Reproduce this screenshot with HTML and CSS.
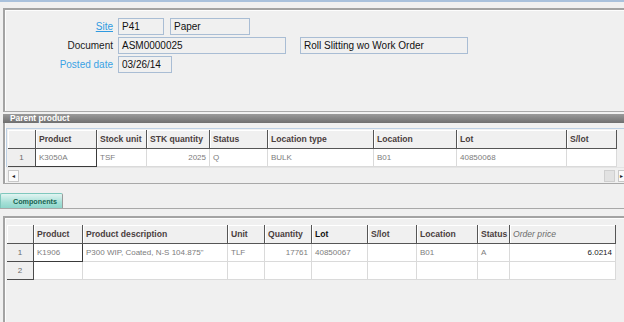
FILE: index.html
```html
<!DOCTYPE html>
<html>
<head>
<meta charset="utf-8">
<link rel="stylesheet" href="styles.css">
</head>
<body>
<div class="topline"></div>
<section class="hdr-panel">
  <div class="frow">
    <a class="lbl link">Site</a>
    <span class="fld w46">P41</span>
    <span class="fld w80 ml6">Paper</span>
  </div>
  <div class="frow">
    <span class="lbl">Document</span>
    <span class="fld w168">ASM0000025</span>
    <span class="fld w168 ml14">Roll Slitting wo Work Order</span>
  </div>
  <div class="frow">
    <span class="lbl blue">Posted date</span>
    <span class="fld w54">03/26/14</span>
  </div>
</section>

<section class="parent-panel">
  <div class="bar">Parent product</div>
  <div class="grid-frame">
    <table class="grid">
      <colgroup>
        <col style="width:28px"><col style="width:61px"><col style="width:50px"><col style="width:63px"><col style="width:58px"><col style="width:106px"><col style="width:83px"><col style="width:110px"><col style="width:50px">
      </colgroup>
      <tr class="hd">
        <th class="rn"></th><th>Product</th><th>Stock unit</th><th>STK quantity</th><th>Status</th><th>Location type</th><th>Location</th><th>Lot</th><th>S/lot</th>
      </tr>
      <tr>
        <td class="rn">1</td><td class="cur">K3050A</td><td>TSF</td><td class="num">2025</td><td>Q</td><td>BULK</td><td>B01</td><td>40850068</td><td></td>
      </tr>
    </table>
  </div>
  <div class="hscroll">
    <span class="sbtn">&#9666;</span>
    <span class="sfill"></span>
    <span class="sthumb"></span>
    <span class="sbtn right">&#9656;</span>
  </div>
</section>

<div class="tabs">
  <span class="tab">Components</span>
</div>

<section class="comp-panel">
  <table class="grid">
    <colgroup>
      <col style="width:27px"><col style="width:49px"><col style="width:145px"><col style="width:37px"><col style="width:47px"><col style="width:56px"><col style="width:49px"><col style="width:61px"><col style="width:32px"><col style="width:106px">
    </colgroup>
    <tr class="hd">
      <th class="rn"></th><th>Product</th><th>Product description</th><th>Unit</th><th>Quantity</th><th class="strong">Lot</th><th>S/lot</th><th>Location</th><th>Status</th><th class="ital">Order price</th>
    </tr>
    <tr>
      <td class="rn">1</td><td class="cur full">K1906</td><td>P300 WIP, Coated, N-S 104.875''</td><td>TLF</td><td class="num">17761</td><td>40850067</td><td></td><td>B01</td><td>A</td><td class="num dark">6.0214</td>
    </tr>
    <tr>
      <td class="rn">2</td><td></td><td></td><td></td><td></td><td></td><td></td><td></td><td></td><td></td>
    </tr>
  </table>
</section>
</body>
</html>
```
FILE: styles.css
```css
html, body {
  margin: 0;
  padding: 0;
  background: #f0f0f0;
  width: 624px;
  height: 322px;
  overflow: hidden;
  font-family: "Liberation Sans", Arial, sans-serif;
}

.topline {
  height: 2px;
  background: #a9c1dc;
}

.hdr-panel {
  margin: 6px 0 0 3px;
  height: 93px;
  padding-top: 8px;
  border-top: 2px solid #a3a3a3;
  border-left: 2px solid #a3a3a3;
  border-bottom: 1px solid #a8a8a8;
  box-shadow: inset 1px 1px 0 #fdfdfd;
  display: flex;
  flex-direction: column;
  gap: 2px;
}

.frow {
  display: flex;
  align-items: center;
  height: 17px;
}

.lbl {
  width: 113px;
  padding-right: 5px;
  box-sizing: border-box;
  text-align: right;
  font-size: 10px;
  color: #1a1a1a;
  flex: none;
}
.lbl.link {
  color: #2f9ae0;
  text-decoration: underline;
}
.lbl.blue { color: #3aa2e4; }

.fld {
  display: block;
  height: 17px;
  box-sizing: border-box;
  border: 1px solid #a9bdd4;
  background: #f0f0f0;
  font-size: 10px;
  line-height: 15px;
  padding-left: 3px;
  color: #111;
  flex: none;
}
.w46 { width: 46px; }
.w80 { width: 80px; }
.w168 { width: 168px; }
.w54 { width: 54px; }
.ml6 { margin-left: 6px; }
.ml14 { margin-left: 14px; }

.parent-panel {
  margin: 2px 0 0 3px;
  height: 69px;
  border-left: 2px solid #a3a3a3;
  border-bottom: 1px solid #a8a8a8;
  box-shadow: inset 1px 0 0 #fdfdfd;
}

.bar {
  height: 9px;
  margin-left: -2px;
  background: linear-gradient(#9a9a9a, #6f6f6f);
  color: #fff;
  font-size: 8.4px;
  font-weight: bold;
  line-height: 9px;
  padding-left: 7px;
}

.grid-frame {
  margin: 5px 0 0 1px;
  padding: 1px 0 0 1px;
  border-top: 1px solid #bdd0e4;
  border-left: 1px solid #bdd0e4;
}

.grid {
  border-collapse: separate;
  border-spacing: 0;
  table-layout: fixed;
  width: 609px;
}

.grid th, .grid td {
  padding: 0 3px;
  overflow: hidden;
  white-space: nowrap;
  text-align: left;
}

.grid tr.hd th {
  height: 18px;
  background: #f0f0f0;
  border-right: 1px solid #555;
  border-bottom: 1px solid #555;
  box-shadow: inset 1px 1px 0 #fff;
  font-size: 8.6px;
  font-weight: bold;
  color: #4a3e3e;
}
.grid tr.hd th.strong { color: #111; }
.grid tr.hd th.ital {
  font-weight: normal;
  font-style: italic;
  color: #6a6a6a;
}

.grid td {
  height: 17px;
  background: #fff;
  border-right: 1px solid #dadada;
  border-bottom: 1px solid #dadada;
  font-size: 8px;
  color: #7c7c7c;
}
.grid td.rn, .grid th.rn {
  background: #efefef;
  text-align: center;
  border-right: 1px solid #4c4c4c;
  border-bottom: 1px solid #4c4c4c;
  color: #6a6a6a;
  font-size: 8px;
}
.grid td.cur {
  border-right: 1px solid #3a3a3a;
  border-bottom: 1px solid #3a3a3a;
}
.grid td.num { text-align: right; }
.grid td.dark { color: #222; }

.hscroll {
  display: flex;
  align-items: center;
  height: 15px;
  margin: 0 -5px 0 2px;
  border-top: 1px solid #e4e4e4;
  background: #f0f0f0;
}
.sbtn {
  width: 9px;
  height: 10px;
  margin-left: 1px;
  border: 1px solid #c8c8c8;
  background: #fbfbfb;
  font-size: 6px;
  line-height: 10px;
  text-align: center;
  color: #222;
  flex: none;
}
.sbtn.right {
  margin-left: 3px;
  text-align: left;
  padding-left: 1px;
  width: 8px;
}
.sfill { flex: 1; }
.sthumb {
  width: 9px;
  height: 10px;
  border: 1px solid #cfcfcf;
  background: #e2e2e2;
  flex: none;
}

.tabs {
  margin-top: 9px;
  height: 15px;
  border-bottom: 1px solid #a8a8a8;
  display: flex;
  align-items: flex-end;
}
.tab {
  display: block;
  margin-left: 0;
  width: 63px;
  height: 15px;
  box-sizing: border-box;
  border: 1px solid #7fc8bd;
  border-bottom: none;
  border-right: 1px solid #9a9a9a;
  border-radius: 2px 2px 0 0;
  background: linear-gradient(#e2f5f2, #a6e0d7 60%, #8ed6cb);
  color: #17624f;
  font-size: 7.2px;
  font-weight: bold;
  line-height: 15px;
  padding-left: 12px;
}

.comp-panel {
  margin: 7px 0 0 3px;
  height: 105px;
  padding: 7px 0 0 2px;
  border-top: 2px solid #a3a3a3;
  border-left: 2px solid #a3a3a3;
  box-shadow: inset 1px 1px 0 #fdfdfd;
}
```
